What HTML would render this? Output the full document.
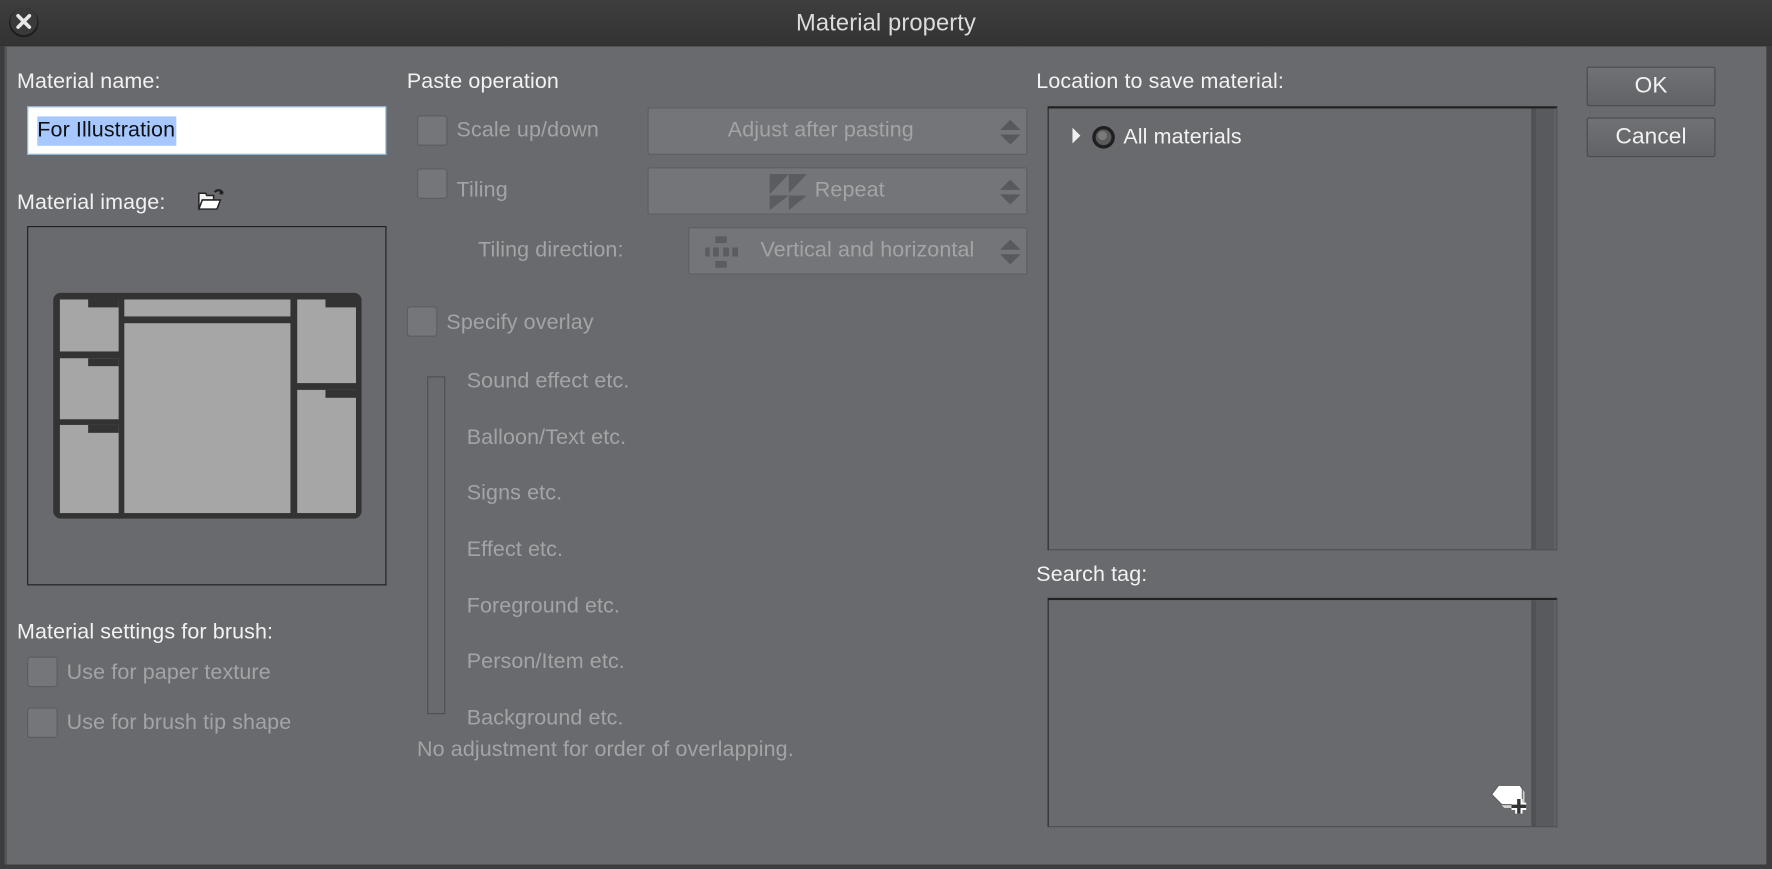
<!DOCTYPE html>
<html><head><meta charset="utf-8"><style>
*{margin:0;padding:0;box-sizing:border-box}
html,body{width:1772px;height:869px;overflow:hidden;background:#2e2e2e}
#s{position:absolute;left:0;top:0;width:1568px;height:769px;transform:scale(1.1301);transform-origin:0 0;background:#696a6e;font-family:"Liberation Sans",sans-serif;font-size:19px;letter-spacing:0.1px;color:#f2f2f2}
.a{position:absolute;white-space:nowrap}
.t{line-height:20px}
.d{color:#a3a4a6}
.cb{position:absolute;width:27px;height:27px;background:#757679;border:1px solid #5c5d60;border-radius:3px}
.combo{position:absolute;background:#747578;border:1px solid #5e5f62;border-radius:2px;color:#a3a4a6;line-height:40px}
.arr{position:absolute;right:3px;top:7px;width:22px;height:28px}
.btn{position:absolute;left:1404px;width:114px;height:35px;border:1px solid #4a4a4d;border-radius:2px;background:linear-gradient(#707175,#626367);text-align:center;line-height:33px;color:#f2f2f2;font-size:20px}
</style></head><body><div id="s">
<div class="a" style="left:0;top:0;width:1568px;height:41px;background:linear-gradient(#3e3e3e,#333);border-bottom:1px solid #2a2a2a"></div>
<div class="a" style="left:0;top:0;width:1568px;line-height:41px;text-align:center;color:#dcdcdc;font-size:21px">Material property</div>
<svg class="a" style="left:7px;top:6px" width="28" height="28"><circle cx="14" cy="14" r="13" fill="#1e1e1e"/><circle cx="14" cy="13" r="12" fill="#3a3a3a"/><path d="M9 8 L19 18 M19 8 L9 18" stroke="#e8e8e8" stroke-width="3.2" stroke-linecap="round"/></svg>
<div class="a" style="left:0;top:41px;width:6px;height:728px;background:#3d3d3f;border-right:2px solid #56575a"></div>
<div class="a" style="left:0;top:765px;width:1568px;height:4px;background:#3d3d3f"></div>
<div class="a" style="left:1563px;top:41px;width:5px;height:728px;background:#3d3d3f"></div>

<div class="a t" style="left:15px;top:63px">Material name:</div>
<div class="a" style="left:24px;top:94px;width:318px;height:43px;background:#fff;border:1px solid #86b4d6"></div>
<div class="a" style="left:33px;top:103px;height:26px;background:#a6c8ff;color:#111;font-size:19px;line-height:26px;padding-right:1px">For Illustration</div>

<div class="a t" style="left:15px;top:170px">Material image:</div>
<svg class="a" style="left:175px;top:165px" width="24" height="22"><path d="M15 5 A4 4 0 0 1 22 6" fill="none" stroke="#222" stroke-width="2"/><path d="M20 3 L23 7 L19 7 Z" fill="#222"/><path d="M1 6 L7 6 L8 8 L14 8 L14 12 L4 12 L1 20 Z" fill="#f4f4f4" stroke="#222" stroke-width="1.3"/><path d="M4 12 L20 12 L17 20 L1 20 Z" fill="#fff" stroke="#222" stroke-width="1.3"/></svg>
<div class="a" style="left:24px;top:200px;width:318px;height:318px;border:1px solid #1f1f1f"></div>
<svg class="a" style="left:47px;top:259px" width="273" height="200">
<rect x="0" y="0" width="273" height="200" rx="7" fill="#333"/>
<g fill="#a6a6a6">
<rect x="6" y="6" width="52" height="46"/><rect x="6" y="58" width="52" height="54"/><rect x="6" y="117" width="52" height="78"/>
<rect x="63" y="6" width="147" height="15"/><rect x="63" y="27" width="147" height="168"/>
<rect x="216" y="6" width="52" height="74"/><rect x="216" y="86" width="52" height="109"/>
</g>
<g fill="#333"><rect x="31" y="6" width="27" height="7"/><rect x="31" y="58" width="27" height="7"/><rect x="31" y="117" width="27" height="7"/><rect x="241" y="6" width="27" height="7"/><rect x="241" y="86" width="27" height="7"/></g>
</svg>

<div class="a t" style="left:15px;top:550px">Material settings for brush:</div>
<div class="cb" style="left:24px;top:581px"></div><div class="a t d" style="left:59px;top:586px">Use for paper texture</div>
<div class="cb" style="left:24px;top:626px"></div><div class="a t d" style="left:59px;top:630px">Use for brush tip shape</div>

<div class="a t" style="left:360px;top:63px">Paste operation</div>
<div class="cb" style="left:369px;top:102px"></div><div class="a t d" style="left:404px;top:106px">Scale up/down</div>
<div class="combo" style="left:573px;top:95px;width:336px;height:42px"><span class="a" style="left:70px">Adjust after pasting</span><svg class="arr"><path d="M2 12 L11 3 L20 12Z M2 16 L11 25 L20 16Z" fill="#58595c"/></svg></div>
<div class="cb" style="left:369px;top:149px"></div><div class="a t d" style="left:404px;top:159px">Tiling</div>
<div class="combo" style="left:573px;top:148px;width:336px;height:42px"><svg class="a" style="left:106px;top:4px" width="36" height="33"><path d="M1 1 L18 1 L1 19Z M18 1 L34 1 L18 18Z M1 20 L18 20 L1 33Z M18 20 L34 20 L18 33Z" fill="#5b5c5f"/></svg><span class="a" style="left:147px">Repeat</span><svg class="arr"><path d="M2 12 L11 3 L20 12Z M2 16 L11 25 L20 16Z" fill="#58595c"/></svg></div>
<div class="a t d" style="left:423px;top:212px">Tiling direction:</div>
<div class="combo" style="left:609px;top:201px;width:300px;height:42px"><svg class="a" style="left:13px;top:7px" width="36" height="28"><path d="M10 0h10v6H10z M10 22h10v6H10z M1 10h4v8H1z M8 10h5v8H8z M17 10h5v8h-5z M25 10h5v8h-5z" fill="#5b5c5f"/></svg><span class="a" style="left:63px">Vertical and horizontal</span><svg class="arr"><path d="M2 12 L11 3 L20 12Z M2 16 L11 25 L20 16Z" fill="#58595c"/></svg></div>

<div class="cb" style="left:360px;top:271px"></div><div class="a t d" style="left:395px;top:276px">Specify overlay</div>
<div class="a" style="left:378px;top:333px;width:16px;height:299px;border:1px solid #4e4f52"></div>
<div class="a t d" style="left:413px;top:328px">Sound effect etc.</div>
<div class="a t d" style="left:413px;top:378px">Balloon/Text etc.</div>
<div class="a t d" style="left:413px;top:427px">Signs etc.</div>
<div class="a t d" style="left:413px;top:477px">Effect etc.</div>
<div class="a t d" style="left:413px;top:527px">Foreground etc.</div>
<div class="a t d" style="left:413px;top:576px">Person/Item etc.</div>
<div class="a t d" style="left:413px;top:626px">Background etc.</div>
<div class="a t d" style="left:369px;top:654px">No adjustment for order of overlapping.</div>

<div class="a t" style="left:917px;top:63px">Location to save material:</div>
<div class="a" style="left:927px;top:94px;width:451px;height:393px;border-top:2px solid #222;border-left:1px solid #2a2a2a;border-right:1px solid #4e4f52;border-bottom:1px solid #4e4f52"></div>
<div class="a" style="left:1355px;top:96px;width:22px;height:390px;background:#595a5d;border-left:4px solid #505154;border-right:2px solid #626367"></div>
<svg class="a" style="left:947px;top:111px" width="12" height="18"><path d="M2 2 L9 9 L2 16Z" fill="#f0f0f0"/></svg>
<svg class="a" style="left:966px;top:111px" width="21" height="21"><circle cx="10.5" cy="10.5" r="10" fill="#1f1f1f"/><circle cx="10.5" cy="10.5" r="7" fill="#5a5a5a"/><circle cx="9.5" cy="9" r="4" fill="#7a7a7a"/></svg>
<div class="a t" style="left:994px;top:112px;font-size:19px">All materials</div>

<div class="a t" style="left:917px;top:499px">Search tag:</div>
<div class="a" style="left:927px;top:529px;width:451px;height:203px;border-top:2px solid #222;border-left:1px solid #2a2a2a;border-right:1px solid #4e4f52;border-bottom:1px solid #4e4f52"></div>
<div class="a" style="left:1355px;top:531px;width:22px;height:200px;background:#595a5d;border-left:4px solid #505154;border-right:2px solid #626367"></div>
<svg class="a" style="left:1317px;top:693px" width="40" height="34"><path d="M11 5 L30 5 L32 8 L32 22 L14 22 L6 13Z" fill="#d0d0d0"/><path d="M9 2 L28 2 L30 5 L30 19 L12 19 L3 10Z" fill="#fff" stroke="#555" stroke-width="0.8"/><path d="M27 14v13 M20.5 20.5h13" stroke="#fff" stroke-width="6.5"/><path d="M27 14v13 M20.5 20.5h13" stroke="#333" stroke-width="3"/></svg>

<div class="btn" style="top:59px">OK</div>
<div class="btn" style="top:104px">Cancel</div>
</div></body></html>
